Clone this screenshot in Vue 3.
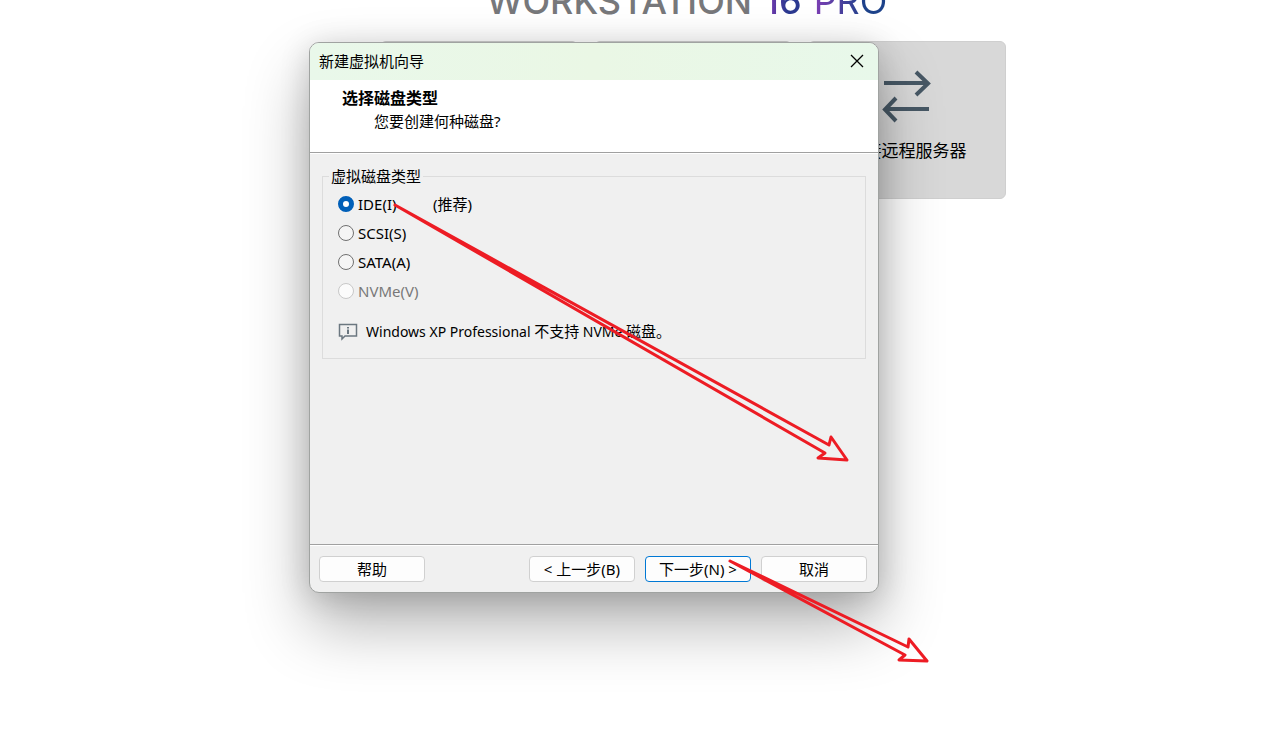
<script setup>
import { ref } from 'vue'

const selected = ref('ide')
const types = [
  { id: 'ide', label: 'IDE(I)', note: true },
  { id: 'scsi', label: 'SCSI(S)' },
  { id: 'sata', label: 'SATA(A)' },
  { id: 'nvme', label: 'NVMe(V)', disabled: true },
]
</script>

<template>
  <div class="screen">
    <main class="home">
      <h1 class="brand">
        <span class="brand-name">WORKSTATION</span>
        <span class="brand-version">16</span>
        <span class="brand-pro">PRO</span>
      </h1>
      <div class="cards">
        <div class="card"></div>
        <div class="card"></div>
        <button class="card" type="button">
          <svg class="swap" viewBox="0 0 50 54" aria-hidden="true">
            <path d="M2 14H46M34 3L46 14.500L34 26M47 40H3M14 29L3 40.500L14 52" />
          </svg>
          <span>连接远程服务器</span>
        </button>
      </div>
    </main>

    <div class="stage">
      <section class="dialog" role="dialog" aria-labelledby="wizard-title">
        <header class="titlebar">
          <span id="wizard-title">新建虚拟机向导</span>
          <button class="close" type="button" aria-label="关闭">
            <svg viewBox="0 0 14 14"><path d="M1 1L13 13M13 1L1 13" /></svg>
          </button>
        </header>
        <div class="intro">
          <h2>选择磁盘类型</h2>
          <p>您要创建何种磁盘<span class="latin">?</span></p>
        </div>
        <div class="body">
          <fieldset>
            <legend>虚拟磁盘类型</legend>
            <div v-for="t in types" :key="t.id" class="option" :class="{ off: t.disabled }">
              <input :id="t.id" v-model="selected" type="radio" name="disk" :value="t.id" :disabled="t.disabled" />
              <label class="latin" :for="t.id">{{ t.label }}</label>
              <span v-if="t.note"><span class="latin">(</span>推荐<span class="latin">)</span></span>
            </div>
            <div class="info">
              <svg class="info-icon" viewBox="0 0 20 18" aria-hidden="true">
                <path class="line" d="M1.500 1.500H18.500V13H7L4 16V13H1.500Z" />
                <path class="mark" d="M9 4h2v1.500H9zM9 6.500h2V11H9z" />
              </svg>
              <span><span class="latin">Windows XP Professional </span>不支持<span class="latin"> NVMe </span>磁盘。</span>
            </div>
          </fieldset>
        </div>
        <footer>
          <button class="btn help" type="button">帮助</button>
          <button class="btn" type="button"><span class="latin">&lt; </span>上一步<span class="latin">(B)</span></button>
          <button class="btn primary" type="button">下一步<span class="latin">(N) &gt;</span></button>
          <button class="btn" type="button">取消</button>
        </footer>
      </section>

      <svg class="arrows" viewBox="309 42 640 640" aria-hidden="true">
        <path d="M395 205L829 445L831 437L847 460L818 458L825 453Z" />
        <path d="M730 561L908 647L909 639L927 661L899 660L905 655Z" />
      </svg>
    </div>
  </div>
</template>

<style>
body {
  background: #fff;
}
</style>

<style scoped>
.screen {
  position: relative;
  min-height: 100vh;
  overflow: hidden;
  color: #000;
  font: 15px/20px "Noto Sans CJK SC", sans-serif;
}
.latin {
  font-family: "Noto Sans", sans-serif;
  font-size: 15px;
  white-space: pre;
}
.home {
  display: flex;
  flex-direction: column;
  align-items: center;
  padding-left: 114px;
}
.brand {
  display: flex;
  gap: 12px;
  height: 35px;
  margin: 0;
  padding: 0 12px 6px 0;
  align-items: flex-end;
  font: 400 36px/68px Inter, sans-serif;
}
.brand-name {
  color: #77787b;
  font-weight: 500;
}
.brand-version,
.brand-pro {
  color: transparent;
  background: linear-gradient(90deg, #8a3ab9, #2b3990 60%);
  background-clip: text;
}
.brand-version {
  font-weight: 500;
}
.brand-pro {
  background-image: linear-gradient(90deg, #7f3fb5, #1d428a 70%);
}
.cards {
  display: flex;
  gap: 16px;
}
.card {
  box-sizing: border-box;
  display: flex;
  flex-direction: column;
  align-items: center;
  width: 198px;
  height: 158px;
  padding: 27px 0 0;
  border: 1px solid #cfcfcf;
  border-radius: 6px;
  background: #d8d8d8;
  color: #000;
  font: 17px/24px "Noto Sans CJK SC", sans-serif;
}
.swap {
  width: 50px;
  height: 54px;
  margin-bottom: 15px;
  fill: none;
  stroke: #475865;
  stroke-width: 4;
}
.stage {
  position: absolute;
  top: 42px;
  left: calc(50% - 327px);
}
.dialog {
  box-sizing: border-box;
  width: 570px;
  max-width: 100vw;
  overflow: hidden;
  border: 1px solid #a0a3a1;
  border-radius: 10px;
  background: #f0f0f0;
  box-shadow: 0 32px 64px rgba(0, 0, 0, 0.3), 0 4px 30px rgba(0, 0, 0, 0.16);
}
.titlebar {
  box-sizing: border-box;
  display: flex;
  align-items: center;
  justify-content: space-between;
  height: 37px;
  padding: 0 14px 2px 9px;
  background: linear-gradient(90deg, #e9f8ea, #eaf7e5 50%, #e8f8ea);
}
.close {
  display: flex;
  padding: 0;
  border: 0;
  background: none;
}
.close svg {
  width: 14px;
  height: 14px;
  fill: none;
  stroke: #000;
  stroke-width: 1.3;
}
.intro {
  height: 65px;
  padding: 7px 0 0 32px;
  border-bottom: 1px solid #a0a0a0;
  background: #fff;
}
.intro h2 {
  margin: 0;
  font-size: 16px;
  line-height: 21px;
}
.intro p {
  margin: 3px 0 0 32px;
}
.body {
  height: 378px;
  padding: 12px 12px 0;
  border-top: 1px solid #fff;
}
fieldset {
  margin: 0;
  padding: 3px 15px 16px;
  border: 1px solid #dcdcdc;
}
legend {
  margin-left: -9px;
  padding: 0 2px;
}
.option {
  display: grid;
  grid-template-columns: 16px 71px 1fr;
  column-gap: 4px;
  align-items: center;
  height: 29px;
}
.option input {
  appearance: none;
  box-sizing: border-box;
  width: 16px;
  height: 16px;
  margin: 0;
  border: 1px solid #707070;
  border-radius: 50%;
  background: #f5f5f5;
}
.option input:checked {
  border: 5px solid #005fb8;
  background: #fff;
}
.option input:disabled {
  border-color: #c8c8c8;
  background: #fbfbfb;
}
.off {
  color: #787878;
}
.info {
  display: flex;
  gap: 8px;
  margin-top: 16px;
  align-items: center;
}
.info .latin {
  font-size: 14px;
}
.info-icon {
  width: 20px;
  height: 18px;
}
.line {
  fill: none;
  stroke: #6b7780;
  stroke-width: 1.5;
}
.mark {
  fill: #6b7780;
}
footer {
  display: flex;
  gap: 10px;
  padding: 11px 11px 10px 9px;
  border-top: 1px solid #a0a0a0;
  box-shadow: inset 0 1px #fff;
}
.btn {
  width: 106px;
  height: 26px;
  padding: 0;
  border: 1px solid #d0d0d0;
  border-radius: 4px;
  background: #fdfdfd;
  color: #000;
  font: inherit;
}
.help {
  margin-right: auto;
}
.primary {
  border-color: #0078d4;
}
.arrows {
  position: absolute;
  top: 0;
  left: 0;
  width: 640px;
  height: 640px;
  fill: none;
  stroke: #ed1c24;
  stroke-width: 3;
  stroke-linejoin: round;
  pointer-events: none;
}
</style>
